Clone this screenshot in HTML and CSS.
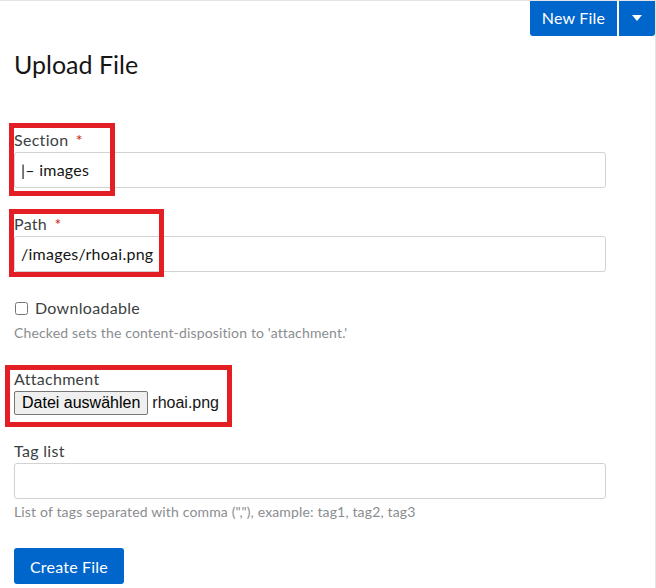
FILE: index.html
```html
<!DOCTYPE html>
<html lang="en">
<head>
<meta charset="utf-8">
<title>Upload File</title>
<link rel="stylesheet" href="styles.css">
</head>
<body>
<div class="page">
  <div class="toolbar">
    <div class="split">
      <button class="btn-primary split-main" type="button">New File</button>
      <button class="btn-primary split-toggle" type="button" aria-label="More">
        <svg width="10" height="6" viewBox="0 0 10 6"><path d="M0 0h10L5 6z" fill="#fff"/></svg>
      </button>
    </div>
  </div>
  <h1 class="title">Upload File</h1>
  <form class="form">
    <div class="group">
      <label class="label">Section <span class="req">*</span></label>
      <div class="input">|– images</div>
    </div>
    <div class="group">
      <label class="label">Path <span class="req">*</span></label>
      <div class="input">/images/rhoai.png</div>
    </div>
    <div class="group">
      <label class="check"><input type="checkbox" class="checkbox"> Downloadable</label>
      <div class="helper">Checked sets the content-disposition to 'attachment.'</div>
    </div>
    <div class="group">
      <label class="label">Attachment</label>
      <div class="file"><span class="file-btn">Datei auswählen</span><span class="file-name">rhoai.png</span></div>
    </div>
    <div class="group">
      <label class="label">Tag list</label>
      <div class="input"></div>
      <div class="helper">List of tags separated with comma (","), example: tag1, tag2, tag3</div>
    </div>
    <div class="actions">
      <button class="btn-primary create" type="button">Create File</button>
    </div>
  </form>
  <div class="mark mark-section"></div>
  <div class="mark mark-path"></div>
  <div class="mark mark-attach"></div>
</div>
</body>
</html>
```

FILE: styles.css
```css
* { box-sizing: border-box; }
html, body { margin: 0; padding: 0; background: #fff; }
body { font-family: Lato, "Open Sans", sans-serif; color: #151515; }
.page {
  position: relative;
  width: 656px;
  height: 588px;
  border-top: 1px solid #e4e4e4;
  border-right: 1px solid #e4e4e4;
  padding-left: 14px;
  overflow: hidden;
}
.toolbar { display: flex; justify-content: flex-end; height: 35px; }
.split { display: flex; gap: 2px; }
.btn-primary {
  background: #0066cc;
  color: #fff;
  border: 0;
  font-family: Lato, sans-serif;
  font-size: 16px;
  letter-spacing: 0.2px;
  cursor: pointer;
}
.split-main { width: 87px; height: 35px; border-radius: 0 0 0 3px; padding: 0 0 3px; }
.split-toggle { width: 36px; height: 35px; border-radius: 0 0 3px 0; display: flex; align-items: center; justify-content: center; padding: 0 0 2px; }
.title {
  margin: 11px 0 0;
  font-size: 25px;
  font-weight: 400;
  line-height: 34px;
  color: #151515;
}
.form { width: 592px; margin-top: 47px; display: flex; flex-direction: column; }
.group { display: flex; flex-direction: column; margin-bottom: 24px; }
.label { font-size: 16px; line-height: 24px; color: #3c3f42; letter-spacing: 0.3px; }
.req { color: #c9190b; margin-left: 3px; }
.input {
  height: 36px;
  border: 1px solid #d2d2d2;
  border-radius: 3px;
  padding: 0 6px;
  font-size: 16px;
  line-height: 34px;
  letter-spacing: 0.25px;
  color: #151515;
}
.check { display: flex; align-items: center; font-size: 16px; line-height: 24px; color: #3c3f42; height: 24px; letter-spacing: 0.3px; }
.checkbox { width: 13px; height: 13px; margin: 0 7px 0 1px; }
.helper { font-size: 14px; line-height: 20px; color: #8a8d90; margin-top: 3px; letter-spacing: 0.15px; }
.file { display: flex; align-items: center; height: 24px; font-family: "Liberation Sans", Arial, sans-serif; font-size: 16px; }
.file-btn {
  height: 24px;
  line-height: 22px;
  padding: 0 7px;
  border: 1px solid #767676;
  border-radius: 2px;
  background: #efefef;
  color: #000;
}
.file-name { margin-left: 4px; color: #151515; }
.actions { margin-top: 2px; }
.create { width: 110px; height: 36px; border-radius: 3px; }
.mark { position: absolute; border: 5px solid #e31e24; }
.mark-section { left: 9px; top: 122px; width: 106px; height: 73px; }
.mark-path { left: 9px; top: 208px; width: 155px; height: 68px; }
.mark-attach { left: 5px; top: 364px; width: 227px; height: 62px; }
```
